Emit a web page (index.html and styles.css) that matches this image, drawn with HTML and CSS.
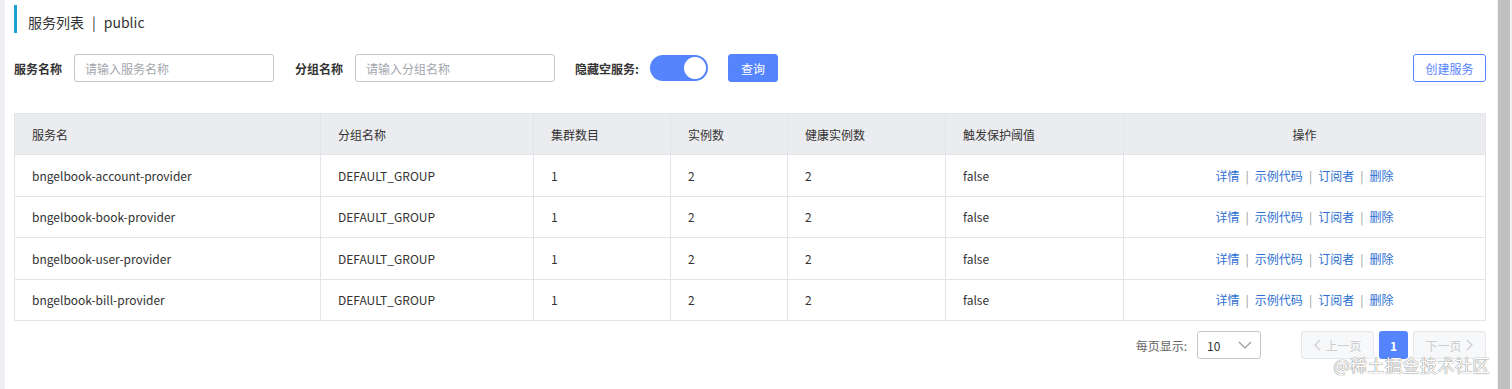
FILE: index.html
```html
<!DOCTYPE html>
<html>
<head>
<meta charset="utf-8">
<link rel="stylesheet" href="styles.css">
</head>
<body>
<div class="app">
  <div class="side"></div>
  <main class="main">
    <div class="title"><span>服务列表</span><span class="sep">|</span><span>public</span></div>
    <div class="filters">
      <label class="lbl">服务名称</label>
      <input class="inp" placeholder="请输入服务名称">
      <label class="lbl l2">分组名称</label>
      <input class="inp" placeholder="请输入分组名称">
      <label class="lbl l3">隐藏空服务:</label>
      <div class="toggle"><div class="knob"></div></div>
      <button class="btn primary">查询</button>
      <div class="spacer"></div>
      <button class="btn outline">创建服务</button>
    </div>
    <table class="tbl">
      <colgroup>
        <col style="width:306px"><col style="width:213px"><col style="width:137px"><col style="width:117px"><col style="width:158px"><col style="width:178px"><col>
      </colgroup>
      <thead>
        <tr><th>服务名</th><th>分组名称</th><th>集群数目</th><th>实例数</th><th>健康实例数</th><th>触发保护阈值</th><th class="c">操作</th></tr>
      </thead>
      <tbody>
        <tr><td>bngelbook-account-provider</td><td>DEFAULT_GROUP</td><td>1</td><td>2</td><td>2</td><td>false</td><td class="c ops"><a>详情</a><i>|</i><a>示例代码</a><i>|</i><a>订阅者</a><i>|</i><a>删除</a></td></tr>
        <tr><td>bngelbook-book-provider</td><td>DEFAULT_GROUP</td><td>1</td><td>2</td><td>2</td><td>false</td><td class="c ops"><a>详情</a><i>|</i><a>示例代码</a><i>|</i><a>订阅者</a><i>|</i><a>删除</a></td></tr>
        <tr><td>bngelbook-user-provider</td><td>DEFAULT_GROUP</td><td>1</td><td>2</td><td>2</td><td>false</td><td class="c ops"><a>详情</a><i>|</i><a>示例代码</a><i>|</i><a>订阅者</a><i>|</i><a>删除</a></td></tr>
        <tr><td>bngelbook-bill-provider</td><td>DEFAULT_GROUP</td><td>1</td><td>2</td><td>2</td><td>false</td><td class="c ops"><a>详情</a><i>|</i><a>示例代码</a><i>|</i><a>订阅者</a><i>|</i><a>删除</a></td></tr>
      </tbody>
    </table>
    <div class="pager">
      <span class="pl">每页显示:</span>
      <div class="sel"><span>10</span><svg width="14" height="8" viewBox="0 0 14 8"><path d="M1 1l6 6 6-6" fill="none" stroke="#999" stroke-width="1.2"/></svg></div>
      <div class="pbtn dis prev"><svg width="8" height="12" viewBox="0 0 8 12"><path d="M7 1L2 6l5 5" fill="none" stroke="#ccc" stroke-width="1.2"/></svg>上一页</div>
      <div class="pbtn cur">1</div>
      <div class="pbtn dis next">下一页<svg width="8" height="12" viewBox="0 0 8 12"><path d="M1 1l5 5-5 5" fill="none" stroke="#ccc" stroke-width="1.2"/></svg></div>
      <div class="wm">@稀土掘金技术社区</div>
    </div>
  </main>
  <div class="scroll"><div class="thumb"></div></div>
</div>
</body>
</html>
```
FILE: styles.css
```css
* { box-sizing: border-box; }
html, body { margin: 0; padding: 0; background: #fff; }
body { font-family: "Noto Sans CJK SC", "Noto Sans", sans-serif; color: #333; font-size: 12px; }
.app { display: flex; width: 1512px; height: 389px; overflow: hidden; }
.side { width: 5px; background: #eef0f3; flex: none; }
.main { flex: 1; padding: 5px 11px 0 9px; position: relative; }
.scroll { width: 15px; flex: none; background: #f1f1f1; padding-left: 1px; }
.thumb { width: 12px; height: 100%; background: #c1c1c1; }
.title { height: 28px; border-left: 3px solid #1fa0d5; padding: 6px 0 0 11px; display: flex; align-items: center; font-size: 14px; color: #333; }
.title .sep { margin: 0 8px 0 8px; }
.filters { display: flex; align-items: center; margin-top: 21px; height: 28px; }
.lbl { font-weight: bold; font-size: 12px; color: #333; margin-right: 12px; }
.l2 { margin-left: 21px; }
.l3 { margin-left: 20px; margin-right: 11px; }
.inp { width: 200px; height: 28px; border: 1px solid #c4c6cf; border-radius: 3px; padding: 0 10px; font-family: inherit; font-size: 12px; outline: none; }
.inp::placeholder { color: #a3a6ad; }
.toggle { width: 58px; height: 26px; border-radius: 13px; background: #5584ff; position: relative; margin-right: 20px; }
.knob { position: absolute; right: 2px; top: 2px; width: 22px; height: 22px; border-radius: 50%; background: #fff; }
.btn { height: 28px; border-radius: 3px; font-family: inherit; font-size: 12px; padding: 0; }
.primary { width: 50px; background: #5584ff; color: #fff; border: 1px solid #5584ff; }
.spacer { flex: 1; }
.outline { width: 73px; background: #fff; color: #5584ff; border: 1px solid #5584ff; }
.tbl { margin-top: 31px; width: 1472px; border-collapse: collapse; table-layout: fixed; border: 1px solid #e3e4e8; }
.tbl th, .tbl td { border: 1px solid #e3e4e8; text-align: left; font-weight: normal; padding: 0 0 0 17px; font-size: 12px; color: #333; white-space: nowrap; }
.tbl th { background: #ebecf0; height: 41px; }
.tbl td { height: 41.5px; }
.tbl .c { text-align: center; padding: 0; }
.ops a { color: #2e6fd1; }
.ops i { font-style: normal; color: #999; margin: 0 6px; }
.pager { display: flex; align-items: center; justify-content: flex-end; margin-top: 10px; height: 28px; position: relative; }
.pl { color: #666; margin-right: 10px; }
.sel { width: 64px; height: 28px; border: 1px solid #c4c6cf; border-radius: 3px; display: flex; align-items: center; justify-content: space-between; padding: 0 8px 0 9px; margin-right: 40px; }
.pbtn { height: 28px; border-radius: 3px; display: flex; align-items: center; justify-content: center; gap: 4px; font-size: 12px; }
.dis { width: 73px; background: #f7f8fa; border: 1px solid #e6e7eb; color: #ccc; }
.cur { width: 29px; background: #5584ff; color: #fff; font-weight: bold; margin: 0 5px; }
.wm { position: absolute; right: -4px; top: 21px; font-size: 17px; color: #fff; letter-spacing: 0.5px; text-shadow: 0 0 1px #777, 0 0 1px #777; }
```
